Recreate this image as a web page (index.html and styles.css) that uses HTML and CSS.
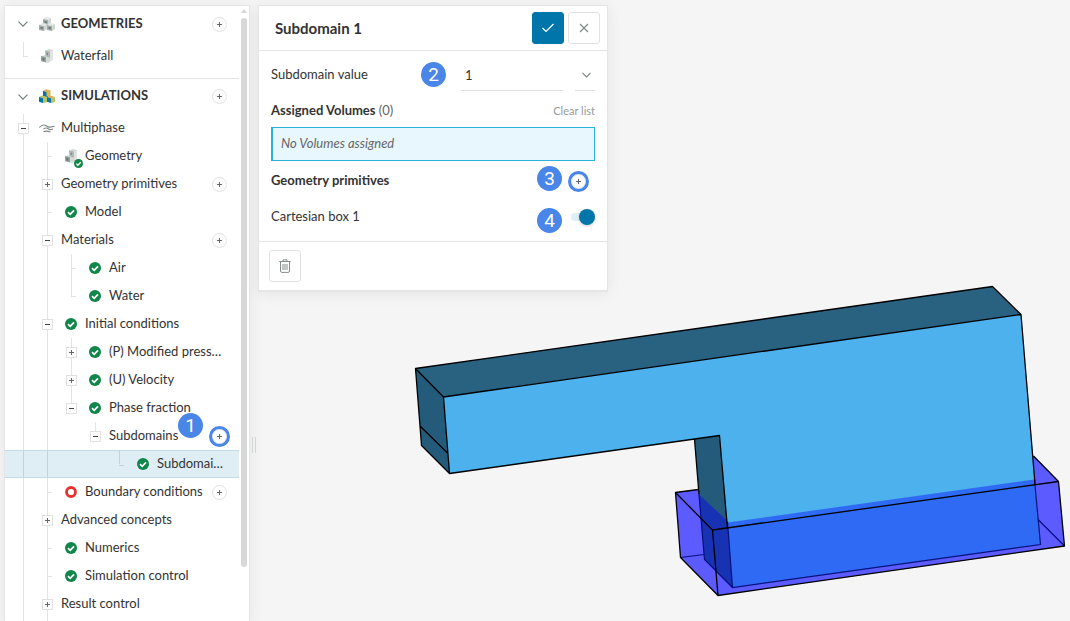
FILE: index.html
```html
<!DOCTYPE html>
<html lang="en">
<head>
<meta charset="utf-8">
<title>Simulation workbench</title>
<link rel="stylesheet" href="styles.css">
</head>
<body>
<svg class="defs" aria-hidden="true">
  <symbol id="plus" viewBox="0 0 5 5"><path d="M2.5 0v5M0 2.5h5" stroke="#666" fill="none"/></symbol>
  <symbol id="minus" viewBox="0 0 5 5"><path d="M0 2.5h5" stroke="#444" fill="none"/></symbol>
  <symbol id="chevron" viewBox="0 0 10 6"><path d="M.5.7 5 5.2 9.500.7" stroke="#778080" stroke-width="1.200" fill="none"/></symbol>
  <symbol id="ok" viewBox="0 0 12 12"><circle cx="6" cy="6" r="6" fill="#11864a"/><path d="M3 6.200 5.200 8.300 9 4.300" stroke="#fff" stroke-width="1.700" fill="none"/></symbol>
  <symbol id="todo" viewBox="0 0 12 12"><circle cx="6" cy="6" r="4.500" fill="#fff" stroke="#e8322e" stroke-width="2.800"/></symbol>
  <symbol id="cube-gray" viewBox="0 0 8 8"><path d="M0 2 3-.2 8 1 5 3z" fill="#e3e8e6"/><path d="M0 2 5 3v5L0 7z" fill="#a3adaa"/><path d="M5 3 8 1v5L5 8z" fill="#d0d6d4"/><path d="M1.500 3.800 3.800 4.300v2L1.500 5.800z" fill="#6f7b77"/></symbol>
  <symbol id="cubes-gray" viewBox="0 0 16 15"><use href="#cube-gray" x="4" y="0" width="8" height="8"/><use href="#cube-gray" x="0" y="6" width="8" height="8"/><use href="#cube-gray" x="8" y="6" width="8" height="8"/></symbol>
  <symbol id="cubes-color" viewBox="0 0 16 15"><path d="M4 2 7 .3 12 1.500 9 3.300z" fill="#e8aa50"/><path d="M4 2 9 3.300V8L4 7z" fill="#0872aa"/><path d="M7 2h4.500v5.500L7 7z" fill="#d8b955"/><path d="M4 2.500 7.500 3.300V8L4 7z" fill="#0872aa"/><path d="M0 8 3 6.500 8 8 5 9.500z" fill="#b5c45c"/><path d="M0 8 4 9.200V14L0 12.800z" fill="#0872aa"/><path d="M4 9.200 8 8v5L4 14.200z" fill="#b5c45c"/><path d="M8 8 11 6.500 16 8 12 9.500z" fill="#e8aa50"/><path d="M8 8 12 9.200V14L8 12.800z" fill="#0872aa"/><path d="M12 9.200 16 8v5L12 14.200z" fill="#b5c45c"/></symbol>
  <symbol id="part" viewBox="0 0 12 14"><path d="M4 1.500 8 0 12 1v9.500L7 14 0 12V7l5-1z" fill="#d5dad8"/><path d="M4 1.500 9 2.500V9L4.500 7z" fill="#b0b8b5"/><path d="M9 2.500 12 1v9.500L9 12z" fill="#dfe3e1"/><path d="M0 7 5 8v5.500L0 12z" fill="#98a3a0"/><path d="M1.200 8.500 3.500 9v3L1.200 11.300z" fill="#6f7b77"/><path d="M5.500 3.500 7 4v2l-1.500-.4z" fill="#7d8885"/></symbol>
  <symbol id="flow" viewBox="0 0 16 10"><path d="M.3 4.500C2.500 2 5 1.200 7.500 3S11 4.300 15.700 3.200M4.500 6.200C6 4.800 8 4.800 9.500 6S12 6.600 14 6M4.500 8.800c2-1.200 4-.8 7 .2" fill="none" stroke="#7d8683" stroke-width="1.100"/></symbol>
</svg>

<main class="viewer">
  <svg class="scene" viewBox="0 0 1070 621" preserveAspectRatio="xMinYMin meet" role="img" aria-label="3D view of the flow volume and Cartesian box 1">
    <path fill="#5b5bff" d="M675.500 492.500 698.500 489.500 1033 455.500 1058.500 481.500 1064.500 546 718 595.500 680.500 557.500z"/>
    <path fill="#296181" d="M415.500 368.500 992.500 286.500 1021 314.500 443.500 397z"/>
    <path fill="#245b7b" d="M415.500 368.500 443.500 397 449.500 473.500 421.500 445.500z"/>
    <path fill="#245b7b" d="M694.500 439 719.500 435.500 732.500 587.500 704.500 559.500z"/>
    <path fill="#4db1ee" d="M443.500 397 1021 314.500 1040.500 544.500 732.500 587.500 719.500 435.500 449.500 473.500z"/>
    <path fill="#1732b2" d="M699 494.500 727.500 521 732.500 587.500 704.500 559.500z"/>
    <path fill="#2f6af5" d="M727.500 522.500 1034.500 479.500 1040.500 544.500 732.500 587.500z"/>
    <g fill="none" stroke="#07107c" stroke-width="1.200">
      <path d="M699 494.500 704.500 559.500 732.500 587.500 1040.500 544.500 1034.500 479.500M727.500 522 732.500 587.500M680.500 557.500 704 554.500M1038.500 520 1064.500 546"/>
    </g>
    <g fill="none" stroke="#000" stroke-width="1.300" stroke-linejoin="round">
      <path d="M415.500 368.500 992.500 286.500 1021 314.500 443.500 397zM415.500 368.500 421.500 445.500 449.500 473.500 443.500 397M420.500 426.500 447.500 453M449.500 473.500 719.500 435.500 727.500 529M694.500 439 699 494.500M1021 314.500 1035 484"/>
      <path d="M698.500 489.500 675.500 492.500 680.500 557.500 718 595.500 1064.500 546 1058.500 481.500 1033.500 456M675.500 492.500 712.500 530 1058.500 481.500M712.500 530 718 595.500"/>
    </g>
  </svg>
</main>

<div class="workspace">
<nav class="sidebar" aria-label="Project tree">
  <div class="tree">
    <section class="group">
      <h2 class="row head"><button class="cell fold" aria-label="Collapse geometries"><svg width="10" height="6"><use href="#chevron"/></svg></button><span class="cell"><svg width="16" height="15"><use href="#cubes-gray"/></svg></span><span class="label">GEOMETRIES</span><button class="add" aria-label="Add geometry"><svg width="5" height="5"><use href="#plus"/></svg></button></h2>
      <ul>
        <li class="row"><i class="cell end"></i><span class="cell"><svg width="12" height="14"><use href="#part"/></svg></span><span class="label">Waterfall</span></li>
      </ul>
    </section>
    <section class="group">
      <h2 class="row head"><button class="cell fold" aria-label="Collapse simulations"><svg width="10" height="6"><use href="#chevron"/></svg></button><span class="cell"><svg width="16" height="15"><use href="#cubes-color"/></svg></span><span class="label">SIMULATIONS</span><button class="add" aria-label="Add simulation"><svg width="5" height="5"><use href="#plus"/></svg></button></h2>
      <ul>
        <li class="row"><span class="cell line"><button class="toggle" aria-label="Collapse"><svg width="5" height="5"><use href="#minus"/></svg></button></span><span class="cell"><svg width="16" height="10"><use href="#flow"/></svg></span><span class="label">Multiphase</span></li>
        <li class="row"><i class="cell line"></i><i class="cell line tee"></i><span class="cell part-ok"><svg width="12" height="14"><use href="#part"/></svg><svg class="mini" width="9" height="9"><use href="#ok"/></svg></span><span class="label">Geometry</span></li>
        <li class="row"><i class="cell line"></i><span class="cell line"><button class="toggle" aria-label="Expand"><svg width="5" height="5"><use href="#plus"/></svg></button></span><span class="label">Geometry primitives</span><button class="add" aria-label="Add geometry primitive"><svg width="5" height="5"><use href="#plus"/></svg></button></li>
        <li class="row"><i class="cell line"></i><i class="cell line tee"></i><span class="cell"><svg width="12" height="12"><use href="#ok"/></svg></span><span class="label">Model</span></li>
        <li class="row"><i class="cell line"></i><span class="cell line"><button class="toggle" aria-label="Collapse"><svg width="5" height="5"><use href="#minus"/></svg></button></span><span class="label">Materials</span><button class="add" aria-label="Add material"><svg width="5" height="5"><use href="#plus"/></svg></button></li>
        <li class="row"><i class="cell line"></i><i class="cell line"></i><i class="cell line tee"></i><span class="cell"><svg width="12" height="12"><use href="#ok"/></svg></span><span class="label">Air</span></li>
        <li class="row"><i class="cell line"></i><i class="cell line"></i><i class="cell end"></i><span class="cell"><svg width="12" height="12"><use href="#ok"/></svg></span><span class="label">Water</span></li>
        <li class="row"><i class="cell line"></i><span class="cell line"><button class="toggle" aria-label="Collapse"><svg width="5" height="5"><use href="#minus"/></svg></button></span><span class="cell"><svg width="12" height="12"><use href="#ok"/></svg></span><span class="label">Initial conditions</span></li>
        <li class="row"><i class="cell line"></i><i class="cell line"></i><span class="cell line"><button class="toggle" aria-label="Expand"><svg width="5" height="5"><use href="#plus"/></svg></button></span><span class="cell"><svg width="12" height="12"><use href="#ok"/></svg></span><span class="label">(P) Modified press…</span></li>
        <li class="row"><i class="cell line"></i><i class="cell line"></i><span class="cell line"><button class="toggle" aria-label="Expand"><svg width="5" height="5"><use href="#plus"/></svg></button></span><span class="cell"><svg width="12" height="12"><use href="#ok"/></svg></span><span class="label">(U) Velocity</span></li>
        <li class="row"><i class="cell line"></i><i class="cell line"></i><span class="cell line last"><button class="toggle" aria-label="Collapse"><svg width="5" height="5"><use href="#minus"/></svg></button></span><span class="cell"><svg width="12" height="12"><use href="#ok"/></svg></span><span class="label">Phase fraction</span></li>
        <li class="row"><i class="cell line"></i><i class="cell line"></i><i class="cell"></i><span class="cell line last"><button class="toggle" aria-label="Collapse"><svg width="5" height="5"><use href="#minus"/></svg></button></span><span class="label">Subdomains</span><button class="add marked" aria-label="Add subdomain"><svg width="5" height="5"><use href="#plus"/></svg></button><span class="badge badge-tree">1</span></li>
        <li class="row selected" aria-current="true"><i class="cell line"></i><i class="cell line"></i><i class="cell"></i><i class="cell"></i><i class="cell end"></i><span class="cell"><svg width="12" height="12"><use href="#ok"/></svg></span><span class="label">Subdomai…</span></li>
        <li class="row"><i class="cell line"></i><i class="cell line tee"></i><span class="cell"><svg width="12" height="12"><use href="#todo"/></svg></span><span class="label">Boundary conditions</span><button class="add" aria-label="Add boundary condition"><svg width="5" height="5"><use href="#plus"/></svg></button></li>
        <li class="row"><i class="cell line"></i><span class="cell line"><button class="toggle" aria-label="Expand"><svg width="5" height="5"><use href="#plus"/></svg></button></span><span class="label">Advanced concepts</span></li>
        <li class="row"><i class="cell line"></i><i class="cell line tee"></i><span class="cell"><svg width="12" height="12"><use href="#ok"/></svg></span><span class="label">Numerics</span></li>
        <li class="row"><i class="cell line"></i><i class="cell line tee"></i><span class="cell"><svg width="12" height="12"><use href="#ok"/></svg></span><span class="label">Simulation control</span></li>
        <li class="row"><i class="cell line"></i><span class="cell line"><button class="toggle" aria-label="Expand"><svg width="5" height="5"><use href="#plus"/></svg></button></span><span class="label">Result control</span></li>
        <li class="row"><i class="cell line"></i><i class="cell line"></i></li>
      </ul>
    </section>
  </div>
  <div class="scrollbar" aria-hidden="true"><i class="scroll-up"></i><i class="thumb"></i></div>
</nav>
<div class="splitter" aria-hidden="true"></div>

<form class="panel">
  <header class="panel-head">
    <h1>Subdomain 1</h1>
    <button class="square primary" type="button" aria-label="Save"><svg width="14" height="10" viewBox="0 0 14 10"><path d="M1.500 5 5 8.500 12.500 1" fill="none" stroke="#fff" stroke-width="1.200"/></svg></button>
    <button class="square" type="button" aria-label="Close"><svg width="10" height="10" viewBox="0 0 10 10"><path d="M1 1l8 8M9 1 1 9" fill="none" stroke="#7d8785" stroke-width="1.100"/></svg></button>
  </header>
  <div class="panel-body">
    <div class="field">
      <label for="value">Subdomain value</label>
      <span class="badge badge-value">2</span>
      <input id="value" type="text" value="1">
      <span class="unit"><select aria-label="Unit"><option></option></select><svg width="9" height="6"><use href="#chevron"/></svg></span>
    </div>
    <div class="field assigned">
      <span class="grow"><b>Assigned Volumes</b> <span class="count">(0)</span></span>
      <button class="clear" type="button">Clear list</button>
    </div>
    <p class="empty">No Volumes assigned</p>
    <div class="field primitives">
      <b class="grow">Geometry primitives</b>
      <button class="add marked" type="button" aria-label="Add geometry primitive"><svg width="5" height="5"><use href="#plus"/></svg></button>
      <span class="badge badge-add">3</span>
    </div>
    <div class="field">
      <label class="grow" for="box">Cartesian box 1</label>
      <input class="switch" id="box" type="checkbox" role="switch" checked>
      <span class="badge badge-switch">4</span>
    </div>
  </div>
  <footer class="panel-foot">
    <button class="square" type="button" aria-label="Delete"><svg width="12" height="14" viewBox="0 0 12 14"><path d="M.3 2.500h11.400M4 2.300V.8h4v1.500M1.500 2.700V12q0 1.400 1.400 1.400h6.200q1.400 0 1.400-1.400V2.700M4 5v6M6 5v6M8 5v6" fill="none" stroke="#858e8b"/></svg></button>
  </footer>
</form>
</div>
</body>
</html>
```

FILE: styles.css
```css
* { box-sizing: border-box; }

body {
  margin: 0;
  height: 100vh;
  overflow: hidden;
  background: #f5f5f5;
  color: #333;
  font: 13px/20px Lato, "Liberation Sans", sans-serif;
}

button, input, select { font: inherit; color: inherit; }
button { padding: 0; border: 0; background: none; cursor: pointer; }
svg { display: block; }
.defs { position: absolute; width: 0; height: 0; }

/* 3D canvas lies under the floating panels */
.viewer { position: absolute; inset: 0; }
.scene { width: 100%; height: 100%; }

.workspace {
  position: relative;
  display: flex;
  align-items: flex-start;
  height: 100%;
  padding: 5px 0 0 4px;
}

.sidebar, .panel {
  background: #fff;
  border: 1px solid #e5e5e5;
  box-shadow: 0 2px 14px rgba(0, 0, 0, .07);
}

.sidebar {
  display: flex;
  width: 246px;
  height: 100%;
  border-bottom: 0;
  overflow: hidden;
}

.tree { flex: 1; min-width: 0; }
.tree ul { margin: 0; padding: 0; list-style: none; }
.group + .group { margin-top: 8px; border-top: 1px solid #e3e5e5; }

.row {
  position: relative;
  display: flex;
  align-items: center;
  height: 28px;
  margin: 0;
  padding: 0 12px 0 6px;
  --line: #e1e4e4;
}
.head { height: 36px; font-size: 13px; font-weight: 700; }
.group + .group .head { height: 35px; }
.group + .group .head .label { padding-bottom: 3px; }

.label {
  flex: 1;
  min-width: 0;
  padding: 0 0 2px 2px;
  white-space: nowrap;
}

.cell {
  position: relative;
  flex: none;
  display: flex;
  align-items: center;
  justify-content: center;
  width: 24px;
  height: 100%;
}
.line::before, .end::before {
  content: "";
  position: absolute;
  top: 0;
  bottom: 0;
  left: 12px;
  width: 1px;
  background: var(--line);
}
.end::before, .last::before { bottom: 50%; }
.tee::after, .end::after {
  content: "";
  position: absolute;
  top: 14px;
  left: 12px;
  width: 5px;
  height: 1px;
  background: var(--line);
}

.toggle {
  position: relative;
  display: grid;
  place-items: center;
  width: 11px;
  height: 11px;
  margin: 1px 0 0 1px;
  border: 1px solid #dfe1e1;
  background: #fff;
}

.mini {
  position: absolute;
  right: 0;
  bottom: 2px;
}

.add {
  flex: none;
  display: grid;
  place-items: center;
  width: 15px;
  height: 15px;
  border: 1px solid #dfe1e1;
  border-radius: 50%;
  background: #fff;
}
.marked { outline: 3px solid #4a86e8; }

.selected {
  --line: #c3d3d1;
  background: #dfedf5;
  border: solid #c3dce9;
  border-width: 1px 0;
}

.scrollbar {
  flex: none;
  width: 10px;
  padding: 3px 0 0 2px;
}
.scroll-up {
  display: block;
  width: 6px;
  margin-bottom: 5px;
  border: solid transparent;
  border-width: 0 3px 4px;
  border-bottom-color: #d6d6d6;
}
.thumb {
  display: block;
  width: 6px;
  height: 549px;
  border-radius: 3px;
  background: #d8d8d8;
}

.splitter {
  flex: none;
  width: 4px;
  height: 16px;
  margin: 432px 3px 0 2px;
  border: solid #d0d8d5;
  border-width: 0 1px;
}

.panel { width: 350px; margin-left: -1px; border-bottom-width: 2px; }

.panel-head {
  display: flex;
  align-items: center;
  gap: 4px;
  height: 45px;
  padding: 0 7px 0 16px;
  border-bottom: 1px solid #e3e5e5;
}
.panel-head h1 { flex: 1; margin: 0; font-size: 15px; font-weight: 700; }

.square {
  display: grid;
  place-items: center;
  width: 32px;
  height: 32px;
  border: 1px solid #e1e3e3;
  border-radius: 3px;
  background: #fff;
}
.primary { border-color: #0075aa; background: #0075aa; }

.panel-body { padding: 4px 12px 6px; }
.field {
  position: relative;
  display: flex;
  align-items: center;
  height: 36px;
}
.field:first-child { height: 40px; }
.field label, .field b { font-size: 13px; }
.field > label, .field > .grow { padding-bottom: 2px; }
.grow { flex: 1; }

.field input[type="text"] {
  width: 102px;
  height: 32px;
  margin-left: auto;
  padding: 0 4px;
  border: 0;
  border-bottom: 1px solid #dfe1e1;
  background: none;
}
.unit { position: relative; width: 20px; height: 32px; margin-left: 12px; }
.unit select {
  width: 100%;
  height: 100%;
  border: 0;
  border-bottom: 1px solid #dfe1e1;
  background: none;
  appearance: none;
}
.unit svg { position: absolute; top: 13px; right: 4px; pointer-events: none; }

.assigned { height: 32px; }
.count { color: #666; }
.clear { color: #999; font-size: 11px; }

.empty {
  margin: 0 0 2px;
  padding: 5px 8px 7px;
  border: 1px solid #2bb1db;
  border-left-width: 2px;
  background: #e8f7fd;
  color: #666;
  font-style: italic;
}
.primitives .marked { margin-right: 9px; }

.switch {
  appearance: none;
  position: relative;
  width: 24px;
  height: 16px;
  margin: 0;
}
.switch::before {
  content: "";
  position: absolute;
  top: 4px;
  left: 0;
  width: 20px;
  height: 8px;
  border-radius: 4px;
  background: #dff0f5;
}
.switch::after {
  content: "";
  position: absolute;
  top: 0;
  right: 0;
  width: 16px;
  height: 16px;
  border-radius: 50%;
  background: #0075aa;
  box-shadow: 0 1px 3px rgba(0, 0, 0, .2);
}

.panel-foot { padding: 8px 10px; border-top: 1px solid #e3e5e5; }

/* Numbered callouts placed over the controls */
.badge {
  position: absolute;
  width: 25px;
  height: 25px;
  border-radius: 50%;
  background: #4a86e8;
  color: #fff;
  font: 19px/25px Roboto, "Liberation Sans", sans-serif;
  text-align: center;
}
.badge-tree { top: -9px; right: 36px; }
.badge-value { left: 150px; top: 7px; }
.badge-add { right: 33px; top: 3px; }
.badge-switch { right: 33px; top: 9px; }
```
